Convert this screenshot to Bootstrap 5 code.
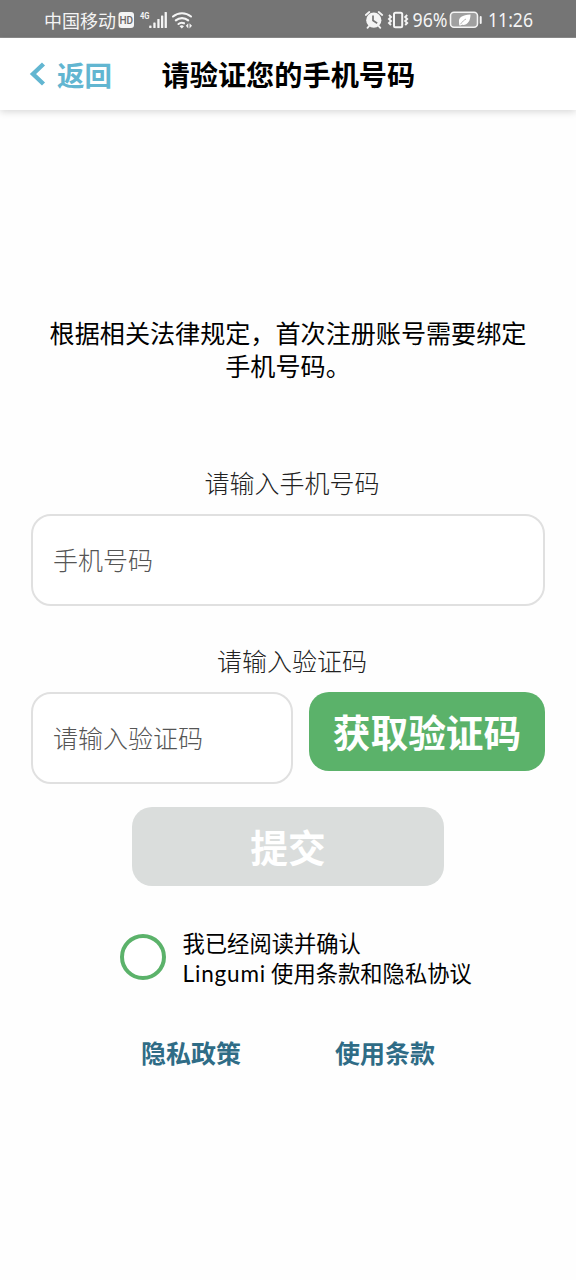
<!DOCTYPE html>
<html lang="zh-CN">
<head>
<meta charset="utf-8">
<meta name="viewport" content="width=device-width, initial-scale=1">
<title>请验证您的手机号码</title>
<link href="https://cdn.jsdelivr.net/npm/bootstrap@5.3.0/dist/css/bootstrap.min.css" rel="stylesheet">
<style>
  body { font-family: "Noto Sans CJK SC", sans-serif; color: #000; background: #fefefe; min-height: 1280px; font-size: 25px; }
  .status-bar { height: 38px; background: #757575; color: #f4f4f4; font-size: 18px; line-height: 36px; padding: 2px 40px 0 44px; border-bottom: 1px solid #8c8c8c; }
  .status-bar svg { display: block; flex: none; }
  .title-bar { height: 72px; background: #fff; box-shadow: 0 2px 7px rgba(0,0,0,.15); }
  .back-link { color: #62b6d1; font-size: 27.5px; font-weight: 700; margin-left: 29px; width: 132.5px; line-height: 40px; }
  .page-title { font-size: 28.2px; font-weight: 700; line-height: 40px; }
  .intro { margin-top: 206px; line-height: 33px; font-size: 25.1px; }
  .fields { margin: 82px 31px 0; }
  .field-label { font-weight: 300; line-height: 36px; font-size: 25px; color: #222; padding-left: 8px; }
  .form-control.field { height: 92px; margin-top: 14px; border: 2px solid #e0e0e0; border-radius: 20px; padding: 0 20px 2px; font-size: 25px; font-weight: 300; background: #fff; }
  .code-row .form-control.field { margin-top: 0; }
  .code-label { margin-top: 36px; }
  .code-row { margin-top: 14px; }
  .field::placeholder { color: #555; opacity: 1; }
  .big-btn { height: 79px; border: 0; border-radius: 20px; color: #fff; font-size: 37.7px; font-weight: 700; line-height: 77px; padding: 0 0 2px; }
  .code-btn, .code-btn:hover { width: 236px; background: #5bb26a; color: #fff; }
  .submit-btn:disabled { width: 312px; background: #dadddc; color: #fff; opacity: 1; margin-top: 23px; }
  .agree { margin: 41px 0 0 120px; gap: 16.5px; font-size: 22.3px; line-height: 30px; }
  .form-check-input.agree-check { width: 46px; height: 46px; border: 4px solid #5bb26a; background: #fff; margin: 0 0 2px; }
  .lingumi { font-family: Lato, sans-serif; font-size: 22.5px; letter-spacing: .85px; }
  .legal { gap: 94px; margin-top: 45px; line-height: 36px; }
  .legal a { color: #2f6c86; font-weight: 700; }
</style>
</head>
<body>
<header>
  <div class="status-bar d-flex align-items-center">
    <span>中国移动</span>
    <svg width="77" height="24" viewBox="0 0 77 24" fill="#f4f4f4">
      <rect x="2.500" y="4" width="15.500" height="16" rx="3"/>
      <text x="10.300" y="16" font-family="Roboto" font-size="10" font-weight="500" fill="#666" text-anchor="middle">HD</text>
      <text x="24" y="11" font-family="Roboto" font-size="9" font-weight="700" textLength="9.500" lengthAdjust="spacingAndGlyphs">4G</text>
      <rect x="33.200" y="17.500" width="2.300" height="2.500" rx=".6"/><rect x="37.300" y="14.500" width="2.300" height="5.500" rx=".6"/><rect x="41.300" y="11" width="2.300" height="9" rx=".6"/><rect x="45" y="7.500" width="2.300" height="12.500" rx=".6"/><rect x="48.600" y="4" width="2.300" height="16" rx=".6"/>
      <g fill="none" stroke="#f4f4f4" stroke-width="2.100" stroke-linecap="round"><path d="M57 8.500a14 14 0 0 1 18 0M59.800 12.400a9.500 9.500 0 0 1 12.400 0M62.500 16a5.200 5.200 0 0 1 5.500-.7"/></g>
      <path d="M63.500 18.300a3.500 3.500 0 0 1 4.500 0l-2.200 2.200zM72.300 15.200v5.200l-2.500-2.600zM73.500 15.200v5.200l2.500-2.600z"/>
    </svg>
    <div class="d-flex align-items-center ms-auto">
      <svg width="45" height="24" viewBox="0 0 45 24">
        <circle cx="8.800" cy="12.200" r="7.600" fill="#f4f4f4"/>
        <path d="M.8 7 4.300 4M17.200 7 13.700 4M4 18.200 2.500 19.800M13.800 18.200 15.300 19.800" stroke="#f4f4f4" stroke-width="1.800" stroke-linecap="round"/>
        <path d="M8 7.500v5l4.200 2.800" fill="none" stroke="#757575" stroke-width="1.700"/>
        <rect x="29" y="4.800" width="8.200" height="14.400" rx="1.500" fill="none" stroke="#f4f4f4" stroke-width="2"/>
        <path d="M24 7l2 2-2 2 2 2-2 2 2 2M42.200 7l-2 2 2 2-2 2 2 2-2 2" fill="none" stroke="#f4f4f4" stroke-width="1.900"/>
      </svg>
      <svg width="78" height="24" viewBox="0 0 78 24">
        <text x="2.500" y="19" font-family="Noto Sans" font-size="19" fill="#f4f4f4" textLength="35" lengthAdjust="spacingAndGlyphs">96%</text>
        <rect x="40.500" y="4.300" width="27" height="15" rx="3.500" fill="#a0a0a0" stroke="#f4f4f4" stroke-width="1.600"/>
        <path d="M49 14C48.500 9.500 52 7 60.500 6.500c0 7-3.500 11-8.300 10.300l-2.400 1-.6-1z" fill="#fff"/>
        <path d="M50.500 16.200c2-2.800 3.500-4.100 5.500-5.200" stroke="#a0a0a0" stroke-width=".8" fill="none"/>
        <rect x="69.700" y="8" width="2" height="8" rx="1" fill="#f4f4f4"/>
      </svg>
      <svg width="48" height="24" viewBox="0 0 48 24"><text x="0" y="19" font-family="Noto Sans" font-size="19" fill="#f4f4f4" textLength="45" lengthAdjust="spacingAndGlyphs">11:26</text></svg>
    </div>
  </div>
  <nav class="title-bar d-flex align-items-center">
    <a href="#" class="back-link d-flex align-items-center text-decoration-none">
      <svg class="flex-shrink-0" width="28" height="26" viewBox="0 0 28 26" fill="none" stroke="#62b6d1" stroke-width="4.400"><path d="M14.500 3 4 13l10.500 10"/></svg><span>返回</span>
    </a>
    <h1 class="page-title m-0">请验证您的手机号码</h1>
  </nav>
</header>
<main>
  <p class="intro text-center mb-0">根据相关法律规定，首次注册账号需要绑定<br>手机号码。</p>
  <form>
    <div class="fields d-flex flex-column">
      <label class="field-label text-center" for="phone">请输入手机号码</label>
      <input id="phone" class="form-control field" placeholder="手机号码">
      <label class="field-label code-label text-center" for="code">请输入验证码</label>
      <div class="code-row d-flex align-items-start gap-3">
        <input id="code" class="form-control field" placeholder="请输入验证码">
        <button type="button" class="btn big-btn code-btn flex-shrink-0">获取验证码</button>
      </div>
    </div>
    <div class="text-center"><button class="btn big-btn submit-btn" disabled>提交</button></div>
    <div class="agree d-flex align-items-center">
      <input id="agree" type="checkbox" class="form-check-input agree-check rounded-circle flex-shrink-0">
      <label for="agree">我已经阅读并确认<br><span class="lingumi">Lingumi</span> 使用条款和隐私协议</label>
    </div>
  </form>
  <div class="legal d-flex justify-content-center">
    <a href="#" class="text-decoration-none">隐私政策</a>
    <a href="#" class="text-decoration-none">使用条款</a>
  </div>
</main>
<script src="https://cdn.jsdelivr.net/npm/bootstrap@5.3.0/dist/js/bootstrap.bundle.min.js"></script>
</body>
</html>
